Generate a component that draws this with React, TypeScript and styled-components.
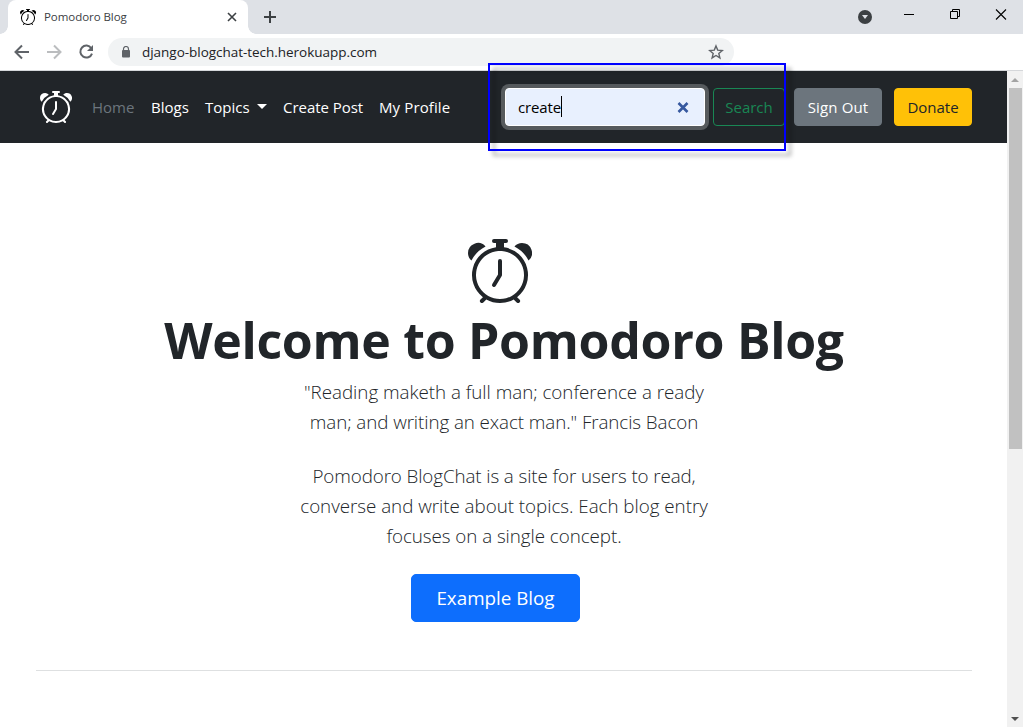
import React from 'react';
import styled, { createGlobalStyle } from 'styled-components';

const GlobalStyle = createGlobalStyle`
  *, *::before, *::after { box-sizing: border-box; }
  body {
    margin: 0;
    background: #fff;
    color: #212529;
    font-family: 'Segoe UI', 'Open Sans', 'Noto Sans', sans-serif;
    overflow: hidden;
  }
  p, h1 { margin: 0; }
  button { font-family: inherit; margin: 0; cursor: pointer; }
  svg { display: block; flex: none; }
`;

const Window = styled.div`
  position: relative;
  display: flex;
  flex-direction: column;
  width: 1023px;
  height: 727px;
  overflow: hidden;
`;

/* Browser chrome */

const TabStrip = styled.header`
  display: flex;
  height: 34px;
  padding-left: 8px;
  background: #dee1e6;
  flex: none;
`;

const Tab = styled.div`
  position: relative;
  display: flex;
  align-items: center;
  width: 240px;
  padding: 0 10px 0 12px;
  background: #fff;
  border-radius: 8px 8px 0 0;

  &::before, &::after {
    content: '';
    position: absolute;
    bottom: 0;
    width: 8px;
    height: 8px;
  }
  &::before {
    left: -8px;
    background: radial-gradient(circle at 0 0, transparent 7.5px, #fff 8px);
  }
  &::after {
    right: -8px;
    background: radial-gradient(circle at 100% 0, transparent 7.5px, #fff 8px);
  }
`;

const TabTitle = styled.span`
  flex: 1;
  margin-left: 8px;
  font-size: 11.5px;
  line-height: 16px;
  letter-spacing: -0.06px;
  color: #3c4043;
  white-space: nowrap;
`;

const NewTab = styled.div`
  display: flex;
  align-items: center;
  margin-left: 16px;
`;

const WindowControls = styled.div`
  display: flex;
  align-items: flex-start;
  margin-left: auto;
`;

const AddressBar = styled.div`
  display: flex;
  align-items: center;
  height: 37px;
  padding-left: 13px;
  border-bottom: 1px solid #d5d7da;
  flex: none;
`;

const NavIcons = styled.div`
  display: flex;
  gap: 14px;
`;

const Omnibox = styled.div`
  display: flex;
  align-items: center;
  width: 626px;
  height: 28px;
  margin-left: 13px;
  padding: 0 10px 0 13px;
  border-radius: 14px;
  background: #f1f3f4;
`;

const Url = styled.span`
  flex: 1;
  margin-left: 11px;
  font-size: 13.5px;
  line-height: 20px;
  letter-spacing: -0.03px;
  color: #202124;
  white-space: nowrap;
`;

/* Page */

const Viewport = styled.div`
  display: flex;
  flex: 1;
  min-height: 0;
`;

const Page = styled.div`
  display: flex;
  flex-direction: column;
  width: 1007px;
`;

const Navbar = styled.nav`
  display: flex;
  align-items: center;
  height: 72px;
  padding: 0 35px 0 40px;
  background: #212529;
  color: #fff;
  flex: none;
`;

const NavLinks = styled.div`
  display: flex;
  gap: 16px;
  margin-left: 20px;
`;

const NavLink = styled.a<{ $width: number; $spacing?: number; $muted?: boolean }>`
  display: flex;
  align-items: center;
  justify-content: space-between;
  width: ${p => p.$width}px;
  font-size: 15px;
  line-height: 24px;
  letter-spacing: ${p => p.$spacing ?? 0}px;
  color: ${p => (p.$muted ? '#6c757d' : '#fff')};
  white-space: nowrap;
`;

const Caret = styled.span`
  border: 5px solid transparent;
  border-top-color: #fff;
  border-bottom: 0;
  transform: translateY(-1px);
`;

const SearchForm = styled.form`
  display: flex;
  gap: 8px;
  margin-left: auto;
`;

const SearchField = styled.div`
  display: flex;
  align-items: center;
  width: 200px;
  height: 38px;
  padding: 0 15px 0 12px;
  border: 1px solid #fff;
  border-radius: 4px;
  background: #e8f0fe;
  box-shadow: 0 0 0 4px #565a5d;
  color: #000;
`;

const SearchText = styled.span`
  font-size: 15px;
  line-height: 24px;
  letter-spacing: -0.15px;
`;

const TextCursor = styled.span`
  width: 1px;
  height: 21px;
  margin: 0 auto 2px 0;
  background: #000;
`;

const Button = styled.button<{
  $width: number;
  $tone: 'outline' | 'secondary' | 'warning' | 'primary';
  $large?: boolean;
  $spacing?: number;
}>`
  display: flex;
  align-items: center;
  justify-content: center;
  width: ${p => p.$width}px;
  height: ${p => (p.$large ? 48 : 38)}px;
  padding: 0;
  border: 1px solid ${p => ({ outline: '#198754', secondary: '#6c757d', warning: '#ffc107', primary: '#0d6efd' })[p.$tone]};
  border-radius: ${p => (p.$large ? 5 : 4)}px;
  background: ${p => ({ outline: 'transparent', secondary: '#6c757d', warning: '#ffc107', primary: '#0d6efd' })[p.$tone]};
  color: ${p => ({ outline: '#198754', secondary: '#fff', warning: '#212529', primary: '#fff' })[p.$tone]};
  font-size: ${p => (p.$large ? 18.8 : 15)}px;
  line-height: 24px;
  letter-spacing: ${p => p.$spacing ?? 0}px;
  white-space: nowrap;
`;

const Actions = styled.div`
  display: flex;
  gap: 12px;
  margin-left: 9px;
`;

const Hero = styled.main`
  display: flex;
  flex-direction: column;
  align-items: center;
  height: 528px;
  margin: 0 35px 0 36px;
  padding-top: 96px;
  border-bottom: 1px solid #dee0e1;
`;

const HeroIcon = styled.div`
  margin-right: 8px;
`;

const Title = styled.h1`
  margin-top: 7px;
  font-size: 50px;
  line-height: 60px;
  font-weight: 700;
  letter-spacing: -0.3px;
  white-space: nowrap;
`;

const Paragraph = styled.p<{ $top: number }>`
  display: flex;
  flex-direction: column;
  align-items: center;
  margin-top: ${p => p.$top}px;
  font-size: 18.8px;
  line-height: 30px;
  font-weight: 300;
`;

const Line = styled.span<{ $spacing?: number }>`
  letter-spacing: ${p => p.$spacing ?? 0}px;
  white-space: nowrap;
`;

const HeroAction = styled.div`
  margin: 23px 17px 0 0;
`;

const Scrollbar = styled.div`
  display: flex;
  flex-direction: column;
  align-items: center;
  width: 16px;
  background: #f1f1f1;
`;

const ScrollArrow = styled.div`
  display: flex;
  align-items: center;
  justify-content: center;
  height: 17px;
`;

const ScrollThumb = styled.div`
  width: 13px;
  height: 361px;
  margin-left: 1px;
  background: #c1c1c1;
`;

const ScrollTrack = styled.div`
  flex: 1;
`;

/* Highlight drawn over the search form */
const Highlight = styled.div`
  position: absolute;
  left: 488px;
  top: 63px;
  width: 298px;
  height: 88px;
  border: 2px solid #0000ff;
  filter: drop-shadow(5px 5px 2px rgba(0, 0, 0, 0.35));
  pointer-events: none;
`;

const AlarmIcon = ({ size, color }: { size: number; color: string }) => (
  <svg width={size} height={size} viewBox="0 0 16 16" fill={color}>
    <path d="M8.5 5.5a.5.5 0 0 0-1 0v3.362l-1.429 2.38a.5.5 0 1 0 .858.515l1.5-2.5A.5.5 0 0 0 8.5 9z" />
    <path d="M6.5 0a.5.5 0 0 0 0 1H7v1.07a7.001 7.001 0 0 0-3.273 12.474l-.602.602a.5.5 0 0 0 .707.708l.746-.746A6.97 6.97 0 0 0 8 16a6.97 6.97 0 0 0 3.422-.892l.746.746a.5.5 0 0 0 .707-.708l-.601-.602A7.001 7.001 0 0 0 9 2.07V1h.5a.5.5 0 0 0 0-1zm1.038 3.018a6 6 0 0 1 .924 0 6 6 0 1 1-.924 0M0 3.5c0 .753.333 1.429.86 1.887A8.04 8.04 0 0 1 4.387 1.86 2.5 2.5 0 0 0 0 3.5M13.5 1c-.753 0-1.429.333-1.887.86a8.04 8.04 0 0 1 3.527 3.527A2.5 2.5 0 0 0 13.5 1" />
  </svg>
);

const BackIcon = ({ color, forward }: { color: string; forward?: boolean }) => (
  <svg width="18" height="18" viewBox="0 0 18 18" fill="none" stroke={color} strokeWidth="2">
    {forward ? <path d="M2 9h13M9 2.5 15.5 9 9 15.5" /> : <path d="M16 9H3M9 2.5 2.5 9 9 15.5" />}
  </svg>
);

export default function App() {
  return (
    <>
      <GlobalStyle />
      <Window>
        <TabStrip>
          <Tab>
            <AlarmIcon size={16} color="#000" />
            <TabTitle>Pomodoro Blog</TabTitle>
            <svg width="12" height="12" viewBox="0 0 12 12" stroke="#3c4043" strokeWidth="1.6">
              <path d="M2 2l8 8M10 2l-8 8" />
            </svg>
          </Tab>
          <NewTab>
            <svg width="12" height="12" viewBox="0 0 12 12" stroke="#3c4043" strokeWidth="2">
              <path d="M6 0v12M0 6h12" />
            </svg>
          </NewTab>
          <WindowControls>
            <svg width="165" height="34" viewBox="0 0 165 34" fill="none">
              <circle cx="7" cy="17" r="7" fill="#3c4043" />
              <path d="M4 15h6l-3 4z" fill="#dee1e6" />
              <path d="M46 14.5h10" stroke="#000" />
              <path d="M92.500 11.500h7v7h-7zM94.500 11.500v-2h7v7h-2" stroke="#000" />
              <path d="M138 9.500l10 10M148 9.500l-10 10" stroke="#000" strokeWidth="1.100" />
            </svg>
          </WindowControls>
        </TabStrip>

        <AddressBar>
          <NavIcons>
            <BackIcon color="#5f6368" />
            <BackIcon color="#bbbdbf" forward />
            <svg width="18" height="18" viewBox="0 0 18 18" fill="none">
              <path d="M14.300 5.200A6 6 0 1 0 15 10.600" stroke="#5f6368" strokeWidth="2" />
              <path d="M16 2v6h-6z" fill="#5f6368" />
            </svg>
          </NavIcons>
          <Omnibox>
            <svg width="10" height="12" viewBox="0 0 10 12" fill="none">
              <path d="M2.500 5V3a2.500 2.500 0 0 1 5 0v2" stroke="#5f6368" strokeWidth="1.200" />
              <rect x="1" y="4" width="8" height="7.500" rx="1" fill="#5f6368" />
            </svg>
            <Url>django-blogchat-tech.herokuapp.com</Url>
            <svg width="16" height="16" viewBox="0 0 16 16" fill="none" stroke="#5f6368" strokeWidth="1.400">
              <path d="M8 1.900l1.700 4.200 4.600.4-3.500 3 1.100 4.400L8 11.500l-3.900 2.400 1.100-4.400-3.500-3 4.600-.4z" />
            </svg>
          </Omnibox>
        </AddressBar>

        <Viewport>
          <Page>
            <Navbar>
              <AlarmIcon size={32} color="#fff" />
              <NavLinks>
                <NavLink $width={43} $muted>Home</NavLink>
                <NavLink $width={38}>Blogs</NavLink>
                <NavLink $width={62}>Topics<Caret /></NavLink>
                <NavLink $width={80} $spacing={-0.04}>Create Post</NavLink>
                <NavLink $width={72} $spacing={0.12}>My Profile</NavLink>
              </NavLinks>
              <SearchForm onSubmit={e => e.preventDefault()}>
                <SearchField>
                  <SearchText>create</SearchText>
                  <TextCursor />
                  <svg width="12" height="12" viewBox="0 0 12 12" stroke="#36589f" strokeWidth="2.600">
                    <path d="M1.500 2l9 9M10.500 2l-9 9" />
                  </svg>
                </SearchField>
                <Button $width={72} $tone="outline">Search</Button>
              </SearchForm>
              <Actions>
                <Button $width={88} $tone="secondary" $spacing={0.15}>Sign Out</Button>
                <Button $width={78} $tone="warning">Donate</Button>
              </Actions>
            </Navbar>

            <Hero>
              <HeroIcon>
                <AlarmIcon size={64} color="#212529" />
              </HeroIcon>
              <Title>Welcome to Pomodoro Blog</Title>
              <Paragraph $top={7}>
                <Line $spacing={-0.03}>"Reading maketh a full man; conference a ready</Line>
                <Line $spacing={-0.08}>man; and writing an exact man." Francis Bacon</Line>
              </Paragraph>
              <Paragraph $top={24}>
                <Line $spacing={-0.1}>Pomodoro BlogChat is a site for users to read,</Line>
                <Line $spacing={-0.03}>converse and write about topics. Each blog entry</Line>
                <Line $spacing={-0.05}>focuses on a single concept.</Line>
              </Paragraph>
              <HeroAction>
                <Button $width={169} $tone="primary" $large>Example Blog</Button>
              </HeroAction>
            </Hero>
          </Page>

          <Scrollbar>
            <ScrollArrow>
              <svg width="8" height="4" viewBox="0 0 8 4"><path d="M0 4L4 0l4 4z" fill="#a3a3a3" /></svg>
            </ScrollArrow>
            <ScrollThumb />
            <ScrollTrack />
            <ScrollArrow>
              <svg width="8" height="4" viewBox="0 0 8 4"><path d="M0 0l4 4 4-4z" fill="#505050" /></svg>
            </ScrollArrow>
          </Scrollbar>
        </Viewport>

        <Highlight />
      </Window>
    </>
  );
}
